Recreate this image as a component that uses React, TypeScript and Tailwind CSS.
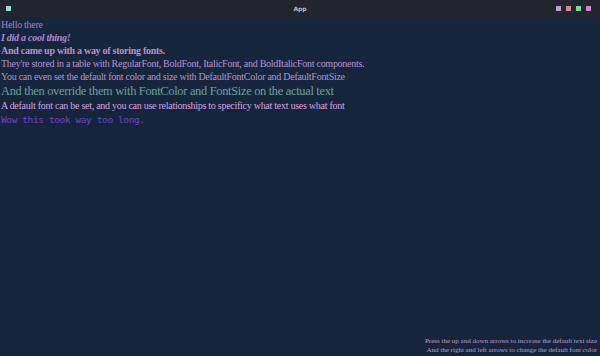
export default function App() {
  return (
    <div className="w-[600px] h-[356px] flex flex-col bg-[#15263c] overflow-hidden">
      {/* title bar */}
      <div className="h-[17px] shrink-0 bg-[#22252b] flex items-center px-[6px] relative">
        <div className="w-[5px] h-[5px] bg-[#8fe0cc]" />
        <span className="absolute left-1/2 -translate-x-1/2 text-[6px] font-bold text-[#b9bcc2] font-['DejaVu_Sans',sans-serif]">
          App
        </span>
        <div className="ml-auto flex gap-[5px] pr-[3px]">
          <div className="w-[5px] h-[5px] bg-[#b9a0d2]" />
          <div className="w-[5px] h-[5px] bg-[#dc8894]" />
          <div className="w-[5px] h-[5px] bg-[#80d898]" />
          <div className="w-[5px] h-[5px] bg-[#d384cb]" />
        </div>
      </div>

      {/* content */}
      <div className="flex-1 flex flex-col px-[1px] pt-[1px] font-['Liberation_Serif',serif] text-[10px] tracking-[-0.27px] leading-[13px] text-[#a57cc0]">
        <p>Hello there</p>
        <p className="italic font-bold text-[#b088d0]">I did a cool thing!</p>
        <p className="font-bold text-[#b890d0]">And came up with a way of storing fonts.</p>
        <p className="text-[#b890d0]">
          They're stored in a table with RegularFont, BoldFont, ItalicFont, and BoldItalicFont components.
        </p>
        <p className="text-[#b890d0]">
          You can even set the default font color and size with DefaultFontColor and DefaultFontSize
        </p>
        <p className="text-[12.4px] tracking-[-0.3px] leading-[16px] text-[#6aa19c]">
          And then override them with FontColor and FontSize on the actual text
        </p>
        <p className="text-[#d3a2e4]">
          A default font can be set, and you can use relationships to specificy what text uses what font
        </p>
        <p className="font-['DejaVu_Sans_Mono',monospace] text-[9.5px] tracking-[-0.4px] leading-[13px] text-[#7040c4] mt-[1px]">
          Wow this took way too long.
        </p>

        <div className="mt-auto flex flex-col items-end pr-[2px] pb-[1px] text-[7px] tracking-normal leading-[9px] text-[#c492d6]">
          <p>Press the up and down arrows to increase the default text size</p>
          <p>And the right and left arrows to change the default font color</p>
        </div>
      </div>
    </div>
  );
}
